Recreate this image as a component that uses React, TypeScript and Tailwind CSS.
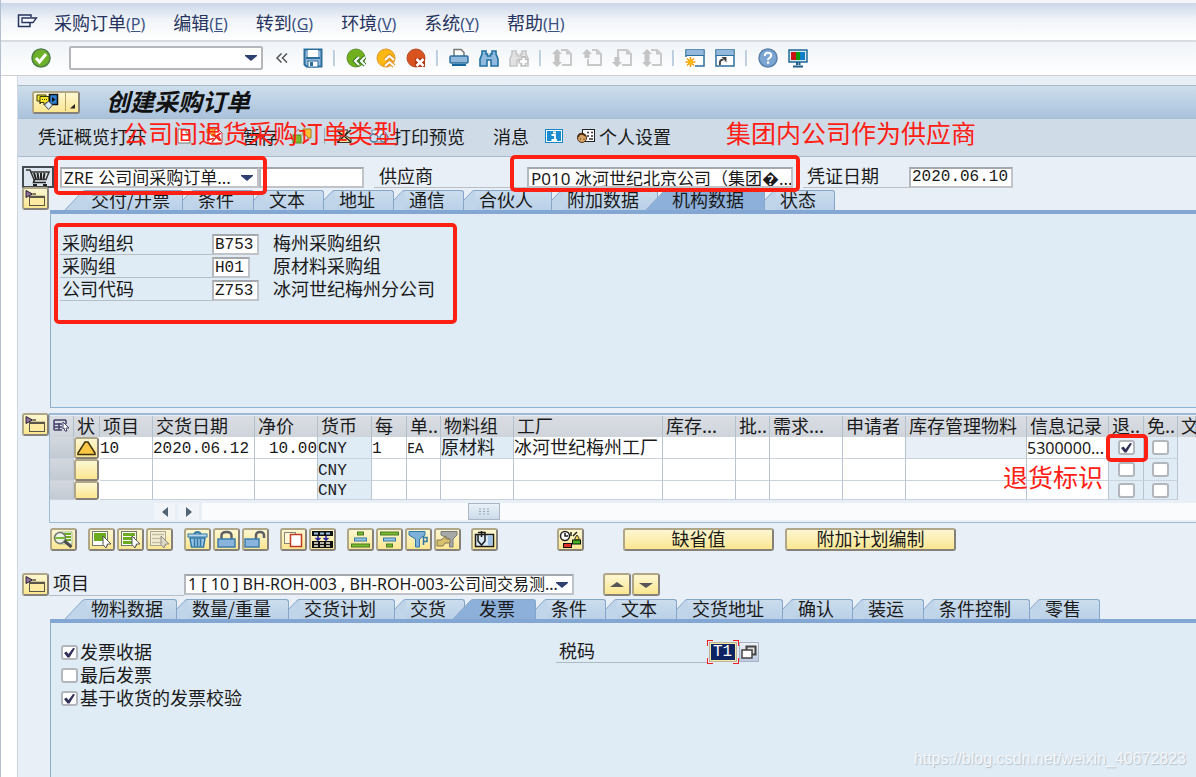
import type { ReactNode } from "react";
import clsx from "clsx";

const YELLOW =
  "border-2 border-t-[#b0a688] border-l-[#b0a688] border-r-[#85817a] border-b-[#85817a] rounded-[3px] bg-linear-to-b from-[#fdf7d2] to-[#fbe68f]";
const FIELD =
  "h-[21px] border-2 border-t-[#a4a8ad] border-l-[#b4b8bd] border-r-[#c0c4c8] border-b-[#c0c4c8] bg-white outline-none";
const MIXED = "text-[17px] font-['Noto_Sans','Noto_Sans_CJK_SC',sans-serif]";
const MONO = "text-[16px] font-['Liberation_Mono',monospace]";

/* ---------- basic parts ---------- */

function Svg({ w = 20, h = 20, children }: { w?: number; h?: number; children: ReactNode }) {
  return (
    <svg width={w} height={h} viewBox={`0 0 ${w} ${h}`} className="shrink-0" aria-hidden="true">
      {children}
    </svg>
  );
}

function IconButton({ label, children }: { label: string; children: ReactNode }) {
  return (
    <button aria-label={label} className="shrink-0 flex items-center justify-center">
      {children}
    </button>
  );
}

function YellowButton({
  label,
  className = "w-[27px]",
  children,
}: {
  label: string;
  className?: string;
  children?: ReactNode;
}) {
  return (
    <button
      aria-label={label}
      className={clsx("h-[23px] shrink-0 flex items-center justify-center", YELLOW, className)}
    >
      {children}
    </button>
  );
}

function FoldButton() {
  return (
    <YellowButton label="折叠">
      <Svg w={23} h={19}>
        <rect x="5.5" y="8.5" width="15" height="8" fill="#fceba0" stroke="#5a5648" />
        <path d="M5 7.500 H21 M9 5 H12" stroke="#5a5648" strokeWidth="1.500" />
        <path d="M2 1.500 L8.500 5 L2 8.500 Z" fill="#8d6c9b" stroke="#2a2233" />
      </Svg>
    </YellowButton>
  );
}

function Checkbox({
  id,
  label,
  checked = false,
}: {
  id?: string;
  label?: string;
  checked?: boolean;
}) {
  return (
    <span className="inline-grid shrink-0 align-top">
      <input
        id={id}
        aria-label={label}
        type="checkbox"
        defaultChecked={checked}
        className="peer [grid-area:1/1] appearance-none w-[17px] h-[15px] border-2 border-[#b3b6ba] rounded-[3px] bg-white"
      />
      <svg
        viewBox="0 0 17 15"
        className="[grid-area:1/1] w-[17px] h-[15px] pointer-events-none invisible peer-checked:visible"
      >
        <path d="M3 8 L5.5 6.5 L7.5 9 L12 3 L14 3.5 L8.5 12.5 L6.5 12.5 Z" fill="#33325a" />
      </svg>
    </span>
  );
}

function Dropdown({ label, value, className }: { label: string; value: string; className: string }) {
  return (
    <span className={clsx("inline-grid grid-rows-[100%] shrink-0 items-center", className)}>
      <select
        aria-label={label}
        className="[grid-area:1/1] w-full h-full min-h-0 appearance-none bg-transparent pl-[2px] leading-[17px] outline-none"
      >
        <option>{value}</option>
      </select>
      <svg viewBox="0 0 12 6" className="[grid-area:1/1] justify-self-end w-3 h-[6px] mr-1 pointer-events-none">
        <path d="M0 0 H12 V1 L6 6 L0 1 Z" fill="#2f3f70" />
      </svg>
    </span>
  );
}

/* ---------- tab strips ---------- */

type Tab = { text: string; width: string };

function TabStrip({ tabs, active }: { tabs: Tab[]; active: number }) {
  return (
    <div role="tablist" className="flex h-5 items-stretch">
      {tabs.map((tab, i) => {
        const on = i === active;
        const wide = on || i === 0;
        const fill = on ? "#8db0da" : "#c0d5ea";
        return (
          <button
            key={tab.text}
            role="tab"
            aria-selected={on}
            className={clsx("flex h-5 shrink-0", tab.width, on && "-ml-3 relative")}
          >
            {wide ? (
              <svg width="22" height="20" viewBox="0 0 22 20" className="shrink-0">
                <path d="M0 20 L19 0.5 H22 V20 Z" fill={fill} />
                <path d="M0 20 L17 2 Q18.500 0.5 20.500 0.5 H22" fill="none" stroke="#85a5c9" />
              </svg>
            ) : (
              <svg width="11" height="20" viewBox="0 0 11 20" className="shrink-0">
                <path d="M0 10 L9 0.5 H11 V20 H0 Z" fill={fill} />
                <path d="M0 10 L7 2.500 Q9 0.5 10 0.5 H11" fill="none" stroke="#85a5c9" />
              </svg>
            )}
            <span
              className={clsx(
                "grow h-5 pl-1 text-left leading-4 whitespace-nowrap border-t border-r border-[#85a5c9] rounded-tr-[3px]",
                on ? "bg-[#8db0da]" : "bg-linear-to-b from-[#cbdded] to-[#b9d0e8]",
              )}
            >
              {tab.text}
            </span>
          </button>
        );
      })}
    </div>
  );
}

const HEADER_TABS: Tab[] = [
  { text: "交付/开票", width: "w-[118px]" },
  { text: "条件", width: "w-[71px]" },
  { text: "文本", width: "w-[70px]" },
  { text: "地址", width: "w-[70px]" },
  { text: "通信", width: "w-[70px]" },
  { text: "合伙人", width: "w-[88px]" },
  { text: "附加数据", width: "w-[106px]" },
  { text: "机构数据", width: "w-[119px]" },
  { text: "状态", width: "w-[70px]" },
];

const ITEM_TABS: Tab[] = [
  { text: "物料数据", width: "w-[112px]" },
  { text: "数量/重量", width: "w-[112px]" },
  { text: "交货计划", width: "w-[106px]" },
  { text: "交货", width: "w-[70px]" },
  { text: "发票", width: "w-[83px]" },
  { text: "条件", width: "w-[70px]" },
  { text: "文本", width: "w-[71px]" },
  { text: "交货地址", width: "w-[106px]" },
  { text: "确认", width: "w-[70px]" },
  { text: "装运", width: "w-[71px]" },
  { text: "条件控制", width: "w-[106px]" },
  { text: "零售", width: "w-[70px]" },
];

/* ---------- top bars ---------- */

const MENUS = [
  ["采购订单", "P"],
  ["编辑", "E"],
  ["转到", "G"],
  ["环境", "V"],
  ["系统", "Y"],
  ["帮助", "H"],
];

function MenuBar() {
  return (
    <nav className="h-[39px] flex items-center pl-4 pt-[2px] gap-7 border-b-2 border-[#d8dce1] bg-linear-to-b from-[#cbd7e9] via-[#f1f4f8] via-45% to-white text-[#26335e]">
      <button aria-label="系统菜单" className="-mr-3 mb-1">
        <Svg w={21} h={14}>
          <path d="M14 3 V1 H1.500 V12.500 H13 V9" fill="none" stroke="#26335e" strokeWidth="1.5" />
          <path d="M5 4 H19.500 L16 8.500 H5 Z" fill="#fff" stroke="#26335e" strokeWidth="1.3" />
        </Svg>
      </button>
      {MENUS.map(([text, key]) => (
        <button key={key} className="leading-5 whitespace-nowrap">
          {text}
          <span className="text-[16px] font-['Noto_Sans'] text-[#3b5384]">
            (<u>{key}</u>)
          </span>
        </button>
      ))}
    </nav>
  );
}

function Separator() {
  return <span className="w-[3px] h-4 bg-[#bcd0e2] border-r border-white shrink-0" />;
}

const BINOCULARS =
  "M3 3 H7 V6 H8.500 V8 H11.500 V6 H13 V3 H17 V6 L19 11 V18 H12 V12 H8 V18 H1 V11 L3 6 Z";

function PageIcon({ up, down }: { up?: boolean; down?: boolean }) {
  return (
    <Svg>
      {up && down ? (
        <path d="M9 2 H15 L19 6 V17 H10" fill="none" stroke="#c9c9c9" strokeWidth="2" />
      ) : (
        <path d={up ? "M10 2 H15 L19 6 V17 H6 V11" : "M6 9 V2 H15 L19 6 V17 H10"} fill="none" stroke="#c9c9c9" strokeWidth="2" />
      )}
      <path d="M14 1 L19.500 6.500 H14 Z" fill="#c9c9c9" />
      {up && <path d="M5 1 L10 6 H7.500 V10 H2.500 V6 H0 Z" fill="#c4c4c4" />}
      {down && <path d="M5 19 L10 14 H7.500 V9 H2.500 V14 H0 Z" fill="#c4c4c4" />}
    </Svg>
  );
}

function SystemToolbar() {
  return (
    <div className="h-[34px] flex items-center gap-[10px] pl-[30px] pb-px border-b border-[#cdced6] bg-linear-to-b from-[#f0f4f8] to-white">
      <IconButton label="输入">
        <Svg>
          <circle cx="10" cy="10" r="9" fill="#6fb02a" stroke="#4f7f45" strokeWidth="1.5" />
          <path d="M5 10 L8.500 14 L15 6" fill="none" stroke="#fff" strokeWidth="3" />
        </Svg>
      </IconButton>
      <Dropdown
        label="命令字段"
        value=""
        className="w-[194px] h-6 ml-2 border-2 border-[#b5b7bb] rounded-[2px] bg-white"
      />
      <IconButton label="收起">
        <Svg>
          <path d="M8.500 5.500 L4 10 L8.500 14.500 M14 5.500 L9.500 10 L14 14.500" fill="none" stroke="#555" strokeWidth="1.5" />
        </Svg>
      </IconButton>
      <IconButton label="保存">
        <Svg>
          <path d="M1.500 1.500 H18.500 V18.500 H3.500 L1.500 16.500 Z" fill="#92b8dc" stroke="#2d6f9c" strokeWidth="2" />
          <rect x="5" y="2" width="10" height="7" fill="#fff" />
          <rect x="3" y="9" width="14" height="2" fill="#2d6f9c" />
          <rect x="5" y="13" width="10" height="6" fill="#fff" stroke="#2d6f9c" />
          <rect x="7" y="14" width="3" height="4" fill="#2d6f9c" />
        </Svg>
      </IconButton>
      <Separator />
      <IconButton label="返回">
        <Svg>
          <circle cx="10" cy="10" r="9" fill="#6fb01c" stroke="#5f8f30" />
          <path d="M13 9 L9 13 L13 17 M19 9 L15 13 L19 17" fill="none" stroke="#3d7a28" strokeWidth="4" />
          <path d="M13 9 L9 13 L13 17 M19 9 L15 13 L19 17" fill="none" stroke="#fff" strokeWidth="2" />
        </Svg>
      </IconButton>
      <IconButton label="退出">
        <Svg>
          <circle cx="10" cy="10" r="9" fill="#fdb813" stroke="#e2952a" />
          <path d="M9 12 L13.500 8 L18 12 M9 18 L13.500 14 L18 18" fill="none" stroke="#e0921c" strokeWidth="4" />
          <path d="M9 12 L13.500 8 L18 12 M9 18 L13.500 14 L18 18" fill="none" stroke="#fff" strokeWidth="2" />
        </Svg>
      </IconButton>
      <IconButton label="取消">
        <Svg>
          <circle cx="10" cy="10" r="9" fill="#d9531e" stroke="#b44a24" />
          <rect x="9" y="10" width="10" height="9" fill="#b03c17" />
          <path d="M10.500 11 L17.500 18 M17.500 11 L10.500 18" stroke="#fff" strokeWidth="2.5" />
        </Svg>
      </IconButton>
      <Separator />
      <IconButton label="打印">
        <Svg>
          <path d="M5 9 V1.500 H12 L15 4.500 V9" fill="#fff" stroke="#777" strokeWidth="1.5" />
          <rect x="1" y="8" width="18" height="7" rx="1" fill="#92b8dc" stroke="#2d6f9c" strokeWidth="1.5" />
          <rect x="3" y="16" width="14" height="2" fill="#17679c" />
        </Svg>
      </IconButton>
      <IconButton label="查找">
        <Svg>
          <path d={BINOCULARS} fill="#8fb9dd" stroke="#2371a3" strokeWidth="1.6" />
        </Svg>
      </IconButton>
      <IconButton label="查找下一个">
        <Svg>
          <path d={BINOCULARS} fill="#e2e2e2" stroke="#c6c6c6" strokeWidth="1.6" />
          <path d="M14.500 8 V18 M9.500 13 H19.500" stroke="#c0c0c0" strokeWidth="5" />
          <path d="M14.500 10 V17 M11 13.500 H18" stroke="#fff" strokeWidth="2.500" />
        </Svg>
      </IconButton>
      <Separator />
      <IconButton label="第一页">
        <PageIcon up down />
      </IconButton>
      <IconButton label="上一页">
        <PageIcon up />
      </IconButton>
      <IconButton label="下一页">
        <PageIcon down />
      </IconButton>
      <IconButton label="最后一页">
        <PageIcon up down />
      </IconButton>
      <Separator />
      <IconButton label="新建会话">
        <Svg>
          <rect x="1" y="2" width="18" height="16" fill="#fff" stroke="#2d6f9c" strokeWidth="1.500" />
          <rect x="1.500" y="2" width="17" height="5" fill="#92b8dc" />
          <path d="M1 7.500 H19" stroke="#2d6f9c" />
          <rect x="0" y="9" width="10" height="11" fill="#fff" />
          <path d="M5.500 9 V19 M0.5 14 H10.500 M2 10.500 L9 17.500 M9 10.500 L2 17.500" stroke="#f49a12" strokeWidth="1.500" />
          <circle cx="5.500" cy="14" r="2.800" fill="#fdb813" />
        </Svg>
      </IconButton>
      <IconButton label="快捷方式">
        <Svg>
          <rect x="1" y="2" width="18" height="16" fill="#fff" stroke="#2d6f9c" strokeWidth="1.500" />
          <rect x="1.500" y="2" width="17" height="5" fill="#92b8dc" />
          <path d="M1 7.500 H19" stroke="#2d6f9c" />
          <path d="M5 17 Q4 11.500 8.500 11.500" fill="none" stroke="#444" strokeWidth="2" />
          <path d="M6.500 9 H11.500 V14.500 Z" fill="#444" />
        </Svg>
      </IconButton>
      <Separator />
      <IconButton label="帮助">
        <Svg>
          <circle cx="10" cy="10" r="9" fill="#7ba5d3" stroke="#5a83ab" strokeWidth="1.500" />
          <path d="M6.800 8 Q6.800 4.800 10 4.800 Q13.200 4.800 13.200 7.500 Q13.200 9 11.300 10 Q10 10.800 10 12.200" fill="none" stroke="#fff" strokeWidth="2" />
          <rect x="9" y="13.500" width="2.200" height="2.200" fill="#fff" />
        </Svg>
      </IconButton>
      <IconButton label="定制布局">
        <Svg>
          <rect x="1" y="2" width="18" height="12" fill="#d7e6f1" stroke="#1f6a97" strokeWidth="1.500" />
          <rect x="3" y="4" width="5" height="8" fill="#cc1111" />
          <rect x="8" y="4" width="4" height="8" fill="#0a9a0a" />
          <rect x="12" y="4" width="5" height="8" fill="#0d7fc4" />
          <path d="M9 14 V17 M11.500 14 V17 M5 18.500 H15" stroke="#1f5f88" strokeWidth="2" />
        </Svg>
      </IconButton>
    </div>
  );
}

/* ---------- title + application toolbar ---------- */

function TitleBar() {
  return (
    <header className="h-[34px] flex items-center pl-[14px] gap-[26px] border-t border-[#adb6c2] border-b border-b-[#a9bccd] bg-linear-to-b from-[#cddeeb] to-[#aac2dc]">
      <YellowButton label="对象服务" className="w-12">
        <Svg w={44} h={18}>
          <path d="M3 2 H12 V8 H8 L6 11 V8 H3 Z" fill="#f5e62a" stroke="#3c3a10" />
          <path d="M6 3.500 H15 V9.500 H12 L10 12 V9.500 H6 Z" fill="#f5e62a" stroke="#3c3a10" />
          <path d="M8 6.500 H13" stroke="#3c3a10" strokeDasharray="1 1" />
          <rect x="15.500" y="1.500" width="8" height="10" fill="#2a7fd0" stroke="#111" strokeWidth="1.500" />
          <path d="M18 4 L21.500 6.500 L18 9 Z" fill="#111" />
          <path d="M14.500 8 L18.500 12 L14.500 16.500 L10.500 12 Z" fill="#dceaf6" stroke="#445" />
          <path d="M31.500 0 V18" stroke="#b5a466" />
          <path d="M41 11 V15.500 H36 Z" fill="#222" />
        </Svg>
      </YellowButton>
      <h1 className="text-[24px] leading-6 pb-[3px] font-bold italic text-[#111]">创建采购订单</h1>
    </header>
  );
}

function AppToolbar() {
  return (
    <div className="h-[38px] flex items-center pl-5 pb-[3px] border-b border-[#a9bccd] bg-[#cfdce8] whitespace-nowrap">
      <button className="leading-5">凭证概览打开</button>
      <span className="w-px h-4 ml-[17px] mr-3 bg-[#9db0c3]" />
      <IconButton label="创建">
        <Svg w={16} h={18}>
          <path d="M2 2 H10 L14 6 V16 H2 Z" fill="#fff" stroke="#7b756c" />
          <path d="M10 2 V6 H14" fill="none" stroke="#7b756c" />
        </Svg>
      </IconButton>
      <span className="w-[14px]" />
      <IconButton label="其他采购订单">
        <Svg w={18} h={18}>
          <path d="M2 8 V16 H16 V6 L12 2 H9" fill="#fff" stroke="#b6483d" />
          <path d="M1 2 H9 V9 H6 L4 6 H1 Z" fill="#f6b32a" stroke="#d0541f" />
          <path d="M6 15 L12 8 L15 14" fill="none" stroke="#d5372a" strokeWidth="1.500" />
        </Svg>
      </IconButton>
      <button className="ml-[18px] w-[50px] text-left leading-5">暂存</button>
      <IconButton label="检查">
        <Svg w={20} h={18}>
          <rect x="1" y="8" width="8" height="8" fill="#7ab929" stroke="#56861d" />
          <path d="M11 2 H19 V11 H16 L14 8 H11 Z" fill="#fbc02d" stroke="#a37b1d" />
          <path d="M3 5 L7 2 M12 15 L16 12" stroke="#777" />
        </Svg>
      </IconButton>
      <span className="w-px h-4 ml-3 mr-[10px] bg-[#9db0c3]" />
      <IconButton label="消息控制">
        <Svg w={18} h={18}>
          <path d="M2 3 H13 L10 8 L16 12 V15.500 H2 L6 9 Z" fill="#f4e3a0" stroke="#3a3222" />
          <path d="M2 4 L9 9 L16 3 M3 15 L9 9 L16 15" fill="none" stroke="#222" strokeWidth="1.500" />
        </Svg>
      </IconButton>
      <button className="flex items-center gap-[3px] ml-[15px] leading-5">
        <Svg w={22} h={18}>
          <path d="M4 3 H15 L18 6 V15 H4 Z" fill="#e9f2f9" stroke="#708fae" />
          <circle cx="6" cy="11" r="4" fill="#cfe0ef" stroke="#53789c" strokeWidth="1.500" />
          <circle cx="16" cy="11" r="4" fill="#cfe0ef" stroke="#53789c" strokeWidth="1.500" />
        </Svg>
        打印预览
      </button>
      <button className="ml-7 leading-5">消息</button>
      <span className="w-4" />
      <IconButton label="信息">
        <Svg w={18} h={16}>
          <rect x="0.5" y="1.500" width="17" height="13" fill="#fff" stroke="#1584c6" />
          <rect x="2" y="3" width="14" height="10" fill="#1a8ccf" />
          <rect x="8" y="3.500" width="3" height="2" fill="#fff" />
          <path d="M6.500 7 H10 V11.500 M6.500 12 H12" fill="none" stroke="#fff" strokeWidth="1.800" />
        </Svg>
      </IconButton>
      <button className="flex items-center gap-[3px] ml-[13px] leading-5">
        <Svg w={20} h={16}>
          <rect x="6.500" y="1.500" width="12" height="12" fill="#fff" stroke="#222" />
          <path d="M11 4.500 H13 M15 4.500 H17 M11 8 H13 M15 8 H17 M13 11 H17" stroke="#333" strokeWidth="1.500" />
          <circle cx="6" cy="10" r="4.500" fill="#dba565" stroke="#4b3015" />
          <path d="M2 9 Q3 5 7 6 L10 8" fill="none" stroke="#4b3015" strokeWidth="2" />
          <path d="M4 11 H5 M7.500 11 H8.500" stroke="#222" />
        </Svg>
        个人设置
      </button>
    </div>
  );
}

/* ---------- order header ---------- */

function OrderHeader() {
  return (
    <div className="flex h-[22px] items-end mt-[9px] pl-1">
      <span className="w-8 h-[22px] border-2 border-[#454b52] bg-[#dde6ee] flex items-center justify-center mr-[6px]">
        <Svg w={26} h={18}>
          <path d="M1 2 H5 L9 11.500 H21 L24 4 H6" fill="none" stroke="#333" strokeWidth="1.500" />
          <path d="M9 5 L11 11 M12.500 5 L13.500 11 M16 5 V11 M19.500 5 L18.500 11" stroke="#222" strokeWidth="2" />
          <path d="M9.500 11.500 L8.500 14.500 H21" fill="none" stroke="#222" strokeWidth="1.500" />
          <path d="M8 17 H12 M18 17 H22" stroke="#222" strokeWidth="2" />
        </Svg>
      </span>
      <Dropdown
        label="订单类型"
        value="ZRE 公司间采购订单..."
        className={clsx("w-[199px]", MIXED, FIELD)}
      />
      <input aria-label="采购订单编号" className={clsx("w-[105px]", FIELD)} />
      <label
        htmlFor="vendor"
        className="w-[153px] h-[21px] ml-[10px] pl-[5px] leading-4 border-b border-[#b9bfc5]"
      >
        供应商
      </label>
      <input
        id="vendor"
        defaultValue="P010 冰河世纪北京公司（集团&#xFFFD;..."
        className={clsx("w-[266px] pl-[2px] leading-[17px]", MIXED, FIELD)}
      />
      <label
        htmlFor="doc-date"
        className="w-[106px] h-[21px] ml-[10px] pl-1 leading-4 border-b border-[#b9bfc5]"
      >
        凭证日期
      </label>
      <input
        id="doc-date"
        defaultValue="2020.06.10"
        className={clsx("w-[104px] pl-px pb-px", MONO, FIELD)}
      />
    </div>
  );
}

const ORG_ROWS = [
  { id: "purch-org", label: "采购组织", value: "B753", text: "梅州采购组织", width: "w-[47px]" },
  { id: "purch-group", label: "采购组", value: "H01", text: "原材料采购组", width: "w-[38px]" },
  { id: "company", label: "公司代码", value: "Z753", text: "冰河世纪梅州分公司", width: "w-[47px]" },
];

function OrgPanel() {
  return (
    <section className="ml-8 border-t-4 border-t-[#83a6d2] border-l border-l-[#8fadcb] border-b border-b-[#8fb2d0] bg-[#dfebf5] pt-5 pb-[106px] pl-[9px] flex flex-col gap-[2px]">
      {ORG_ROWS.map((row) => (
        <div key={row.id} className="flex h-[21px]">
          <label htmlFor={row.id} className="w-[152px] pl-[2px] leading-4 border-b border-[#b5bfc5]">
            {row.label}
          </label>
          <span className="w-[61px]">
            <input
              id={row.id}
              defaultValue={row.value}
              className={clsx("block pl-px", row.width, MONO, FIELD)}
            />
          </span>
          <span className="leading-4">{row.text}</span>
        </div>
      ))}
    </section>
  );
}

/* ---------- item table ---------- */

const COLUMNS = [
  { head: "", width: "w-[24px]" },
  { head: "状", width: "w-[26px]" },
  { head: "项目", width: "w-[53px]" },
  { head: "交货日期", width: "w-[102px]" },
  { head: "净价", width: "w-[63px]" },
  { head: "货币", width: "w-[54px]" },
  { head: "每", width: "w-[35px]" },
  { head: "单..", width: "w-[34px]" },
  { head: "物料组", width: "w-[73px]" },
  { head: "工厂", width: "w-[149px]" },
  { head: "库存...", width: "w-[73px]" },
  { head: "批..", width: "w-[34px]" },
  { head: "需求...", width: "w-[73px]" },
  { head: "申请者", width: "w-[63px]" },
  { head: "库存管理物料", width: "w-[121px]" },
  { head: "信息记录", width: "w-[82px]" },
  { head: "退..", width: "w-[35px]" },
  { head: "免..", width: "w-[34px]" },
  { head: "文", width: "" },
];

const ITEMS = [
  {
    height: "h-[22px]",
    first: true,
    cells: ["10", "2020.06.12", "10.00", "CNY", "1", "EA", "原材料", "冰河世纪梅州工厂", "", "", "", "", "", "5300000..."],
  },
  {
    height: "h-[22px]",
    first: false,
    cells: ["", "", "", "CNY", "", "", "", "", "", "", "", "", "", ""],
  },
  {
    height: "h-[19px]",
    first: false,
    cells: ["", "", "", "CNY", "", "", "", "", "", "", "", "", "", ""],
  },
];

const CELL = "p-0 border-r border-b border-r-[#b9c4d3] border-b-[#c9d2dd] whitespace-nowrap";

function ItemTable() {
  return (
    <div className="grow min-w-0 border-t-2 border-l border-b border-[#9dbad6] pt-px pb-[2px]">
      <table className="w-full table-fixed border-separate border-spacing-0">
        <colgroup>
          {COLUMNS.map((c, i) => (
            <col key={i} className={c.width} />
          ))}
        </colgroup>
        <thead>
          <tr className="h-[21px]">
            {COLUMNS.map((c, i) => (
              <th
                key={i}
                className="p-0 pl-[3px] pb-[3px] text-left font-normal leading-[18px] whitespace-nowrap border-r border-[#b4bfcc] bg-linear-to-b from-[#dadee3] to-[#cfd4db]"
              >
                {i === 0 ? (
                  <Svg w={17} h={14}>
                    <path d="M1 2 H13 M1 6 H9 M1 9 H9 M1 12 H9 M1 2 V12 M6 5 V12 M13 2 V6" stroke="#46426b" strokeWidth="1.500" fill="none" />
                    <path d="M10 4 L16 10 H13 L14 13 H12 L11 10 L10 11 Z" fill="#fff" stroke="#46426b" />
                  </Svg>
                ) : (
                  c.head
                )}
              </th>
            ))}
          </tr>
        </thead>
        <tbody>
          {ITEMS.map((item, r) => (
            <tr key={r} className={clsx(item.height, "bg-white")}>
              <td className={clsx(CELL, "bg-linear-to-b from-[#d3d8de] to-[#c3cad3] border-b-[#aab4c0]")} />
              <td className="p-0">
                <button
                  aria-label={`状态 ${r + 1}`}
                  className={clsx("w-[25px] flex items-center justify-center", item.height, YELLOW)}
                >
                  {item.first && (
                    <Svg w={21} h={16}>
                      <path d="M9 2 H12 L19 13 V14.500 H2 V13 Z" fill="#fcc744" stroke="#3c3210" strokeWidth="1.500" />
                    </Svg>
                  )}
                </button>
              </td>
              {item.cells.map((cell, c) => (
                <td
                  key={c}
                  className={clsx(
                    CELL,
                    c < 5 && ["pt-[2px] leading-4", MONO],
                    c === 2 && "text-right",
                    c === 5 && "pt-px leading-4 text-[14px] font-['Noto_Sans',sans-serif]",
                    (c === 6 || c === 7) && "pb-[3px] leading-[15px]",
                    c === 13 && "leading-4 text-[16px] font-['Noto_Sans',sans-serif]",
                    (c === 3 || (item.first && c === 6)) && "bg-[#dfebf5]",
                    item.first && c === 12 && "bg-[#e8eff6]",
                  )}
                >
                  {cell}
                </td>
              ))}
              <td className={clsx(CELL, "bg-[#dfebf5] text-center leading-[0px]")}>
                <Checkbox label={`退货 ${r + 1}`} checked={item.first} />
              </td>
              <td className={clsx(CELL, "bg-[#dfebf5] text-center leading-[0px]")}>
                <Checkbox label={`免费 ${r + 1}`} />
              </td>
              <td className="p-0 bg-[#e8eff6]" />
            </tr>
          ))}
        </tbody>
      </table>
      {/* horizontal scroll bar */}
      <div className="flex h-[17px] mt-[3px] ml-[104px] gap-[3px]">
        <button aria-label="向左滚动" className="w-[21px] bg-[#f1f5f9] flex items-center justify-center">
          <Svg w={6} h={10}>
            <path d="M6 0 V10 L0 5 Z" fill="#4e6373" />
          </Svg>
        </button>
        <button aria-label="向右滚动" className="w-[21px] bg-[#f1f5f9] flex items-center justify-center">
          <Svg w={6} h={10}>
            <path d="M0 0 V10 L6 5 Z" fill="#4e6373" />
          </Svg>
        </button>
        <div className="grow bg-[#fafbfc] pl-[266px]">
          <div className="w-8 h-[17px] border border-[#a8b6c6] bg-linear-to-b from-[#eaf1f8] to-[#ccdbe9] flex items-center justify-center">
            <Svg w={11} h={7}>
              <path d="M0 1 H11 M0 3.500 H11 M0 6 H11" stroke="#95a8ba" strokeDasharray="2 2" />
            </Svg>
          </div>
        </div>
      </div>
    </div>
  );
}

/* ---------- item toolbar ---------- */

function ListIcon({ gray, full }: { gray?: boolean; full?: boolean }) {
  const line = gray ? "#c2bea8" : "#6cab1e";
  return (
    <Svg w={23} h={19}>
      <rect x="2.500" y="1.500" width="15" height="14" fill={gray ? "#f4efd2" : "#fff"} stroke={gray ? "#a9a695" : "#6e7a68"} />
      {full ? (
        <path d="M4 4.500 H16 M4 8.500 H16 M4 12.500 H13" stroke={line} strokeWidth={gray ? 1.5 : 3} />
      ) : (
        <rect x="4" y="3" width="12" height="8" fill={line} />
      )}
      <path d="M13 6 L21 14 H17.500 L16 18 L13 14.500 Z" fill={gray ? "#ddd9c6" : "#fff"} stroke={gray ? "#8f8d82" : "#555"} />
    </Svg>
  );
}

function LockIcon({ open }: { open?: boolean }) {
  return (
    <Svg w={23} h={19}>
      {open ? (
        <path d="M12 9 V5.500 Q12 2 16 2 Q20 2 20 5.500 V8" fill="none" stroke="#5d6166" strokeWidth="2.500" />
      ) : (
        <path d="M6.500 9 V5.500 Q6.500 2 11.500 2 Q16.500 2 16.500 5.500 V9" fill="none" stroke="#5d6166" strokeWidth="2.500" />
      )}
      <rect x={open ? 1 : 3} y="9" width={open ? 14 : 17} height="8" fill="#8ab4dc" stroke="#3b7dac" strokeWidth="1.500" />
    </Svg>
  );
}

function ItemToolbar() {
  return (
    <div className="flex items-center gap-[11px] pl-8 mt-[5px]">
      <YellowButton label="明细">
        <Svg w={23} h={19}>
          <rect x="7" y="2" width="13" height="12" fill="#fff" stroke="#9fb98a" />
          <path d="M9 4 H19 M9 7 H19 M9 10 H19" stroke="#6cab1e" strokeWidth="2" />
          <circle cx="8" cy="8" r="5.500" fill="#f0f6ea" fillOpacity="0.9" stroke="#77797a" strokeWidth="1.500" />
          <path d="M3 8 H13" stroke="#7fb63c" strokeWidth="2" />
          <path d="M12.500 11 L19.500 17" stroke="#4b4d4e" strokeWidth="3" />
        </Svg>
      </YellowButton>
      <div className="flex gap-[2px]">
        <YellowButton label="选择行">
          <ListIcon />
        </YellowButton>
        <YellowButton label="全选">
          <ListIcon full />
        </YellowButton>
        <YellowButton label="取消选择">
          <ListIcon full gray />
        </YellowButton>
      </div>
      <div className="flex gap-[2px]">
        <YellowButton label="删除">
          <Svg w={23} h={19}>
            <path d="M8 4 Q11.500 0 15 4" fill="none" stroke="#2d78a9" strokeWidth="2" />
            <rect x="2" y="4" width="19" height="3" fill="#bcd8ec" stroke="#2d78a9" />
            <path d="M4 8 H19 L17.500 17 H5.500 Z" fill="#9cc5e3" stroke="#2d78a9" strokeWidth="1.500" />
            <path d="M8.500 9 V16 M11.500 9 V16 M14.500 9 V16" stroke="#2d78a9" strokeWidth="1.500" />
          </Svg>
        </YellowButton>
        <YellowButton label="冻结">
          <LockIcon />
        </YellowButton>
        <YellowButton label="解冻">
          <LockIcon open />
        </YellowButton>
      </div>
      <div className="flex gap-[2px]">
        <YellowButton label="复制">
          <Svg w={23} h={19}>
            <rect x="2.500" y="2.500" width="11" height="11" fill="#fff8d8" stroke="#87847b" />
            <rect x="8.500" y="4.500" width="11" height="12" fill="#fff" stroke="#c23a22" strokeWidth="1.500" />
          </Svg>
        </YellowButton>
        <YellowButton label="复制行">
          <Svg w={23} h={19}>
            <rect x="1" y="1" width="21" height="5" fill="#111" />
            <path d="M3 3.500 H21" stroke="#9cc5e3" strokeWidth="2" strokeDasharray="4 2" />
            <path d="M7 6 V9 M15 6 V9 M4.500 8 L7 10 L9.500 8 M12.500 8 L15 10 L17.500 8" fill="none" stroke="#2220a0" strokeWidth="1.500" />
            <rect x="1" y="11" width="21" height="7" fill="#111" />
            <path d="M3 13 H21 M3 16 H21" stroke="#f4f2e0" strokeWidth="1.500" strokeDasharray="4 2" />
          </Svg>
        </YellowButton>
      </div>
      <div className="flex gap-[2px]">
        <YellowButton label="升序">
          <Svg w={23} h={19}>
            <rect x="8.500" y="2" width="6" height="3" fill="#7ab929" stroke="#47782a" />
            <rect x="5.500" y="8" width="12" height="3" fill="#9cc5e3" stroke="#2d78a9" />
            <rect x="2.500" y="14" width="18" height="3" fill="#7ab929" stroke="#47782a" />
          </Svg>
        </YellowButton>
        <YellowButton label="降序">
          <Svg w={23} h={19}>
            <rect x="2.500" y="2" width="18" height="3" fill="#7ab929" stroke="#47782a" />
            <rect x="5.500" y="8" width="12" height="3" fill="#9cc5e3" stroke="#2d78a9" />
            <rect x="8.500" y="14" width="6" height="3" fill="#7ab929" stroke="#47782a" />
          </Svg>
        </YellowButton>
        <YellowButton label="筛选">
          <Svg w={23} h={19}>
            <path d="M2 1.500 H18 V5 L12.500 9 V17 H8.500 V9 L2 5 Z" fill="#7fb0da" stroke="#2d78a9" />
            <path d="M16.500 6 V15 M16.500 7.500 H20 V11.500 H16.500" fill="none" stroke="#2d78a9" strokeWidth="1.500" />
          </Svg>
        </YellowButton>
        <YellowButton label="删除筛选">
          <Svg w={23} h={19}>
            <path d="M5 1.500 H21 V5 L17 9 V17 H13.500 V9 L5 5 Z" fill="#a7a9a6" stroke="#77797a" />
            <path d="M1 10 H5 L10 6 V9 H14 V13 H9 L7 16 H1 Z" fill="#d9c06c" stroke="#84795a" />
          </Svg>
        </YellowButton>
      </div>
      <YellowButton label="附加信息" className="w-[27px] -ml-px">
        <Svg w={23} h={19}>
          <rect x="2.500" y="4.500" width="18" height="12" fill="#dceaf6" stroke="#1c1c1c" strokeWidth="1.500" />
          <path d="M5 5 V11 L8.500 15 L12 11 V5 M8.500 1 V7 M5 2.500 H12 V5" fill="none" stroke="#1c1c1c" strokeWidth="1.500" />
          <path d="M15 5.500 V15 H19 V5.500 Z" fill="#9fc4e6" />
        </Svg>
      </YellowButton>
      <YellowButton label="可用性检查" className="w-[27px] ml-12">
        <Svg w={23} h={19}>
          <circle cx="6" cy="6" r="4.500" fill="#fff" stroke="#222" strokeWidth="1.500" />
          <path d="M6 3 V6 H9 M12 2 V6 M14 6 L18 2" fill="none" stroke="#222" strokeWidth="1.500" />
          <path d="M16 8 L18 5 L20 8 V10 H16 Z" fill="#f2d74e" stroke="#333" />
          <rect x="13.500" y="10" width="8" height="4" fill="#3fb61f" stroke="#111" />
          <rect x="4.500" y="13.500" width="8" height="4" fill="#e0302a" stroke="#111" />
        </Svg>
      </YellowButton>
      <YellowButton label="缺省值" className="w-[151px] ml-7 pb-[3px]">
        缺省值
      </YellowButton>
      <YellowButton label="附加计划编制" className="w-[171px] pb-[3px]">
        附加计划编制
      </YellowButton>
    </div>
  );
}

/* ---------- item details ---------- */

function ItemSelector() {
  return (
    <div className="flex items-center mt-[22px] pl-1">
      <FoldButton />
      <span className="w-[135px] h-[22px] pl-1 leading-4 border-b border-[#b5bfc5]">项目</span>
      <Dropdown
        label="项目"
        value="1 [ 10 ] BH-ROH-003 , BH-ROH-003-公司间交易测..."
        className={clsx("w-[390px] text-[16px] font-['Noto_Sans','Noto_Sans_CJK_SC',sans-serif]", FIELD)}
      />
      <div className="flex gap-px ml-[29px]">
        <YellowButton label="上一项" className="w-7">
          <Svg w={14} h={6}>
            <path d="M7 0 L14 5 H0 Z" fill="#555" />
          </Svg>
        </YellowButton>
        <YellowButton label="下一项" className="w-7">
          <Svg w={14} h={6}>
            <path d="M7 6 L14 1 H0 Z" fill="#555" />
          </Svg>
        </YellowButton>
      </div>
    </div>
  );
}

const INVOICE_OPTIONS = [
  { id: "inv-receipt", text: "发票收据", checked: true },
  { id: "final-inv", text: "最后发票", checked: false },
  { id: "gr-based", text: "基于收货的发票校验", checked: true },
];

function InvoicePanel() {
  return (
    <section className="grow ml-8 border-t-4 border-t-[#83a6d2] border-l border-l-[#8fadcb] bg-[#dfebf5] pt-[17px] pl-[10px] flex items-start">
      <div className="w-[495px] pt-px">
        {INVOICE_OPTIONS.map((o) => (
          <div key={o.id} className="flex items-center h-[23px] gap-[2px]">
            <Checkbox id={o.id} checked={o.checked} />
            <label htmlFor={o.id} className="leading-4 pb-1">
              {o.text}
            </label>
          </div>
        ))}
      </div>
      <div className="flex">
        <label htmlFor="tax-code" className="w-[151px] h-[23px] pl-[3px] leading-5 border-b border-[#aebac2]">
          税码
        </label>
        {/* focused field with corner marks */}
        <span className="relative h-[24px] w-[32px] p-[2px]">
          <span className="absolute left-0 top-0 w-[6px] h-[6px] border-t border-l border-[#f02020]" />
          <span className="absolute right-0 top-0 w-[6px] h-[6px] border-t border-r border-[#f02020]" />
          <span className="absolute left-0 bottom-0 w-[6px] h-[6px] border-b border-l border-[#f02020]" />
          <span className="absolute right-0 bottom-0 w-[6px] h-[6px] border-b border-r border-[#f02020]" />
          <span className="block w-7 h-5 p-px border border-[#b9b39c] bg-[#f6e9a4]">
            <input
              id="tax-code"
              defaultValue="T1"
              className={clsx("block w-6 h-4 pl-[2px] leading-4 bg-[#0c2461] text-white outline-none", MONO)}
            />
          </span>
        </span>
        <button
          aria-label="税码搜索帮助"
          className="w-5 h-5 mt-[2px] border border-[#a9b3c4] bg-linear-to-b from-[#eef2f8] to-[#bccbe4] flex items-center justify-center"
        >
          <Svg w={16} h={14}>
            <rect x="5.500" y="1.500" width="9" height="8" fill="#ddd" stroke="#444" strokeWidth="2" />
            <rect x="1" y="5" width="10" height="8" fill="#fff" stroke="#444" strokeWidth="1.500" />
          </Svg>
        </button>
      </div>
    </section>
  );
}

/* ---------- red notes drawn over the screen ---------- */

function Notes() {
  return (
    <div className="pointer-events-none text-[25px] leading-8 text-[#ff2014] whitespace-nowrap">
      <span className="absolute left-[122px] top-[116px]">公司间退货采购订单类型</span>
      <span className="absolute left-[725px] top-[116px]">集团内公司作为供应商</span>
      <span className="absolute left-[1002px] top-[460px]">退货标识</span>
      <span className="absolute left-[53px] top-[156px] w-[213px] h-[39px] border-4 border-[#ff2014] rounded-[5px]" />
      <span className="absolute left-[509px] top-[155px] w-[290px] h-[37px] border-4 border-[#ff2014] rounded-[5px]" />
      <span className="absolute left-[53px] top-[223px] w-[403px] h-[101px] border-4 border-[#ff2014] rounded-[5px]" />
      <span className="absolute left-[1105px] top-[434px] w-[42px] h-[28px] border-4 border-[#ff2014] rounded-[5px]" />
    </div>
  );
}

export default function App() {
  return (
    <div className="relative min-h-screen flex flex-col overflow-hidden border-l border-[#b3c0d0] bg-white text-[18px] text-[#1a1a1a] font-['Noto_Sans_CJK_SC',sans-serif]">
      <div className="h-[3px] bg-[#f3f5fa]" />
      <MenuBar />
      <SystemToolbar />
      <main className="grow flex flex-col ml-4 pt-[9px] border-l border-[#cfd8e4] bg-[#e8eff6]">
        <TitleBar />
        <AppToolbar />
        <OrderHeader />
        <div className="flex items-end pl-1 h-[22px]">
          <FoldButton />
          <div className="ml-4">
            <TabStrip tabs={HEADER_TABS} active={7} />
          </div>
        </div>
        <OrgPanel />
        <div className="flex items-start pl-1 mt-[5px]">
          <FoldButton />
          <ItemTable />
        </div>
        <ItemToolbar />
        <ItemSelector />
        <div className="mt-[3px] pl-[47px]">
          <TabStrip tabs={ITEM_TABS} active={4} />
        </div>
        <InvoicePanel />
      </main>
      <Notes />
      <span className="absolute right-[10px] bottom-[6px] text-[16px] leading-6 font-['Liberation_Sans',sans-serif] text-[#f4f7fa] [text-shadow:1px_1px_1px_#b4c0ca]">
        https://blog.csdn.net/weixin_40672823
      </span>
    </div>
  );
}
